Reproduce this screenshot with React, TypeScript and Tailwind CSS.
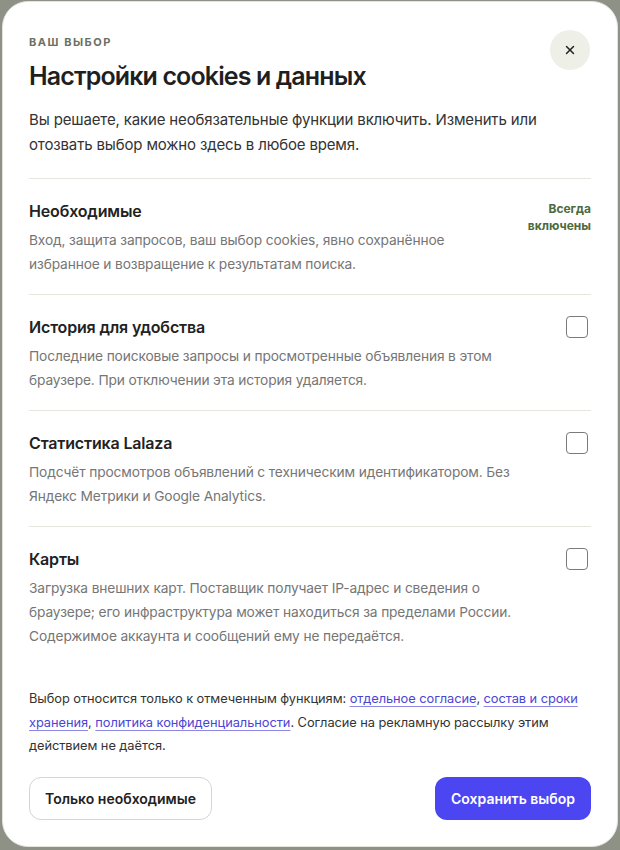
import { X } from "lucide-react"

const sections = [
  {
    title: "Необходимые",
    text: "Вход, защита запросов, ваш выбор cookies, явно сохранённое избранное и возвращение к результатам поиска.",
    always: true,
  },
  {
    title: "История для удобства",
    text: "Последние поисковые запросы и просмотренные объявления в этом браузере. При отключении эта история удаляется.",
  },
  {
    title: "Статистика Lalaza",
    text: "Подсчёт просмотров объявлений с техническим идентификатором. Без Яндекс Метрики и Google Analytics.",
  },
  {
    title: "Карты",
    text: "Загрузка внешних карт. Поставщик получает IP-адрес и сведения о браузере; его инфраструктура может находиться за пределами России. Содержимое аккаунта и сообщений ему не передаётся.",
  },
]

function Section({ title, text, always, last }: { title: string; text: string; always?: boolean; last?: boolean }) {
  return (
    <div className={`flex items-start justify-between gap-4 pt-5 pb-[18px] ${last ? "" : "border-b border-[#e6e6e1]"}`}>
      <div className="flex-1">
        <h3 className="text-[16px] leading-6 font-semibold text-[#222] tracking-[-0.01em]">{title}</h3>
        <p className="mt-[5px] max-w-[500px] text-[13.75px] leading-6 text-[#767676] tracking-[-0.01em]">{text}</p>
      </div>
      {always ? (
        <div className="text-right text-[12px] leading-[17px] font-bold text-[#4e6a3c] pt-[1px]">
          Всегда
          <br />
          включены
        </div>
      ) : (
        <input
          type="checkbox"
          className="appearance-none mt-[1px] mr-[3px] w-[22px] h-[22px] rounded-[4px] border-[1.5px] border-[#7a7a7a] bg-white shrink-0"
        />
      )}
    </div>
  )
}

export default function App() {
  return (
    <div className="w-[620px] h-[850px] bg-[#8d9186] px-[2px] pt-[1px]" style={{ fontFamily: "Inter, 'Noto Sans', sans-serif" }}>
      <div className="h-[846px] bg-white rounded-[26px] border border-[#e4e4de] px-[26px] pt-[32px]">
        <div className="flex items-start justify-between">
          <div>
            <div className="text-[11px] leading-4 font-bold tracking-[0.14em] text-[#6c7062] uppercase">Ваш выбор</div>
            <h2 className="mt-[10px] text-[25px] leading-8 font-semibold tracking-[-0.035em] text-[#1f1f1f]">
              Настройки cookies и данных
            </h2>
          </div>
          <button className="-mt-[4px] mr-[1px] w-10 h-10 rounded-full bg-[#eef0e8] flex items-center justify-center text-[#222]">
            <X className="w-[14px] h-[14px]" strokeWidth={2.5} />
          </button>
        </div>

        <p className="mt-[15px] text-[15px] leading-[25px] text-[#333] tracking-[-0.01em] pb-[21px] border-b border-[#e6e6e1]">
          Вы решаете, какие необязательные функции включить. Изменить или отозвать выбор можно здесь в любое время.
        </p>

        {sections.map((s, i) => (
          <Section key={s.title} {...s} last={i === sections.length - 1} />
        ))}

        <p className="mt-[21px] text-[12.85px] leading-[23.5px] text-[#333] tracking-[-0.005em]">
          Выбор относится только к отмеченным функциям:{" "}
          <a href="#" className="text-[#4b45d6] underline decoration-[#8b87e6] underline-offset-[3px]">отдельное согласие</a>,{" "}
          <a href="#" className="text-[#4b45d6] underline decoration-[#8b87e6] underline-offset-[3px]">состав и сроки хранения</a>,{" "}
          <a href="#" className="text-[#4b45d6] underline decoration-[#8b87e6] underline-offset-[3px]">политика конфиденциальности</a>. Согласие на
          рекламную рассылку этим действием не даётся.
        </p>

        <div className="mt-[19px] flex items-center justify-between">
          <button className="h-[43px] px-[15px] rounded-[12px] border border-[#d6d6cf] text-[14px] font-semibold text-[#222]">
            Только необходимые
          </button>
          <button className="h-[43px] px-[16px] rounded-[12px] bg-[#4c46f2] text-[14px] font-semibold text-white">
            Сохранить выбор
          </button>
        </div>
      </div>
    </div>
  )
}
